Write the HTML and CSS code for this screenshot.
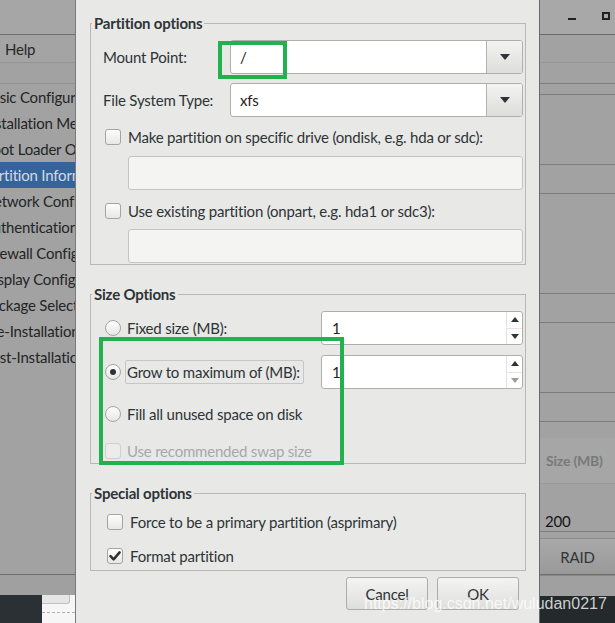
FILE: index.html
```html
<!DOCTYPE html>
<html>
<head>
<meta charset="utf-8">
<title>Partition Information</title>
<link rel="stylesheet" href="styles.css">
</head>
<body>
<div class="screen">
  <aside class="side-left">
    <div class="win-title"></div>
    <div class="menubar"><span class="menu-item">Help</span></div>
    <div class="toolbar"></div>
    <ul class="nav">
      <li>Basic Configuration</li>
      <li>Installation Method</li>
      <li>Boot Loader Options</li>
      <li class="sel">Partition Information</li>
      <li>Network Configuration</li>
      <li>Authentication</li>
      <li>Firewall Configuration</li>
      <li>Display Configuration</li>
      <li>Package Selection</li>
      <li>Pre-Installation Script</li>
      <li>Post-Installation Script</li>
    </ul>
    <div class="statusbar"></div>
    <div class="taskbar">
      <div class="task-dark"></div>
      <div class="task-light"><div class="task-btn"></div><div class="task-dash"></div></div>
    </div>
  </aside>

  <section class="dialog">
    <fieldset class="frame frame-part">
      <legend>Partition options</legend>
      <div class="form-grid">
        <span class="lbl">Mount Point:</span>
        <div class="combo">
          <span class="combo-text">/</span>
          <span class="combo-btn"><svg width="10" height="6" viewBox="0 0 10 6"><polygon points="0,0 10,0 5,6" fill="#2e3436"/></svg></span>
        </div>
        <span class="lbl">File System Type:</span>
        <div class="combo">
          <span class="combo-text">xfs</span>
          <span class="combo-btn"><svg width="10" height="6" viewBox="0 0 10 6"><polygon points="0,0 10,0 5,6" fill="#2e3436"/></svg></span>
        </div>
      </div>
      <label class="opt opt-first"><span class="cb"></span><span>Make partition on specific drive (ondisk, e.g. hda or sdc):</span></label>
      <div class="entry entry-dis entry-a"></div>
      <label class="opt opt-second"><span class="cb"></span><span>Use existing partition (onpart, e.g. hda1 or sdc3):</span></label>
      <div class="entry entry-dis entry-b"></div>
    </fieldset>

    <fieldset class="frame frame-size">
      <legend>Size Options</legend>
      <div class="size-grid">
        <label class="opt-r"><span class="radio"></span><span class="rlabel">Fixed size (MB):</span></label>
        <div class="spin">
          <span class="spin-text">1</span>
          <span class="spin-btns">
            <span class="spin-up"><svg width="8" height="5" viewBox="0 0 8 5"><polygon points="0,5 8,5 4,0" fill="#2e3436"/></svg></span>
            <span class="spin-down"><svg width="8" height="5" viewBox="0 0 8 5"><polygon points="0,0 8,0 4,5" fill="#2e3436"/></svg></span>
          </span>
        </div>
        <label class="opt-r"><span class="radio on"></span><span class="rlabel focus">Grow to maximum of (MB):</span></label>
        <div class="spin">
          <span class="spin-text">1</span>
          <span class="spin-btns">
            <span class="spin-up"><svg width="8" height="5" viewBox="0 0 8 5"><polygon points="0,5 8,5 4,0" fill="#2e3436"/></svg></span>
            <span class="spin-down"><svg width="8" height="5" viewBox="0 0 8 5"><polygon points="0,0 8,0 4,5" fill="#9c9c9a"/></svg></span>
          </span>
        </div>
        <label class="opt-r wide fill-row"><span class="radio"></span><span class="rlabel">Fill all unused space on disk</span></label>
        <label class="opt-r wide swap-row disabled"><span class="cb cb-dis"></span><span class="rlabel">Use recommended swap size</span></label>
      </div>
    </fieldset>

    <fieldset class="frame frame-special">
      <legend>Special options</legend>
      <label class="opt opt-sp1"><span class="cb"></span><span>Force to be a primary partition (asprimary)</span></label>
      <label class="opt opt-sp2"><span class="cb"><svg width="14" height="14" viewBox="0 0 14 14"><path d="M2.5 7.2 L5.6 10.3 L11.6 3.4" fill="none" stroke="#2e3436" stroke-width="2.6" stroke-linecap="round" stroke-linejoin="round"/></svg></span><span>Format partition</span></label>
    </fieldset>

    <div class="actions">
      <button class="btn">Cancel</button>
      <button class="btn">OK</button>
    </div>
  </section>

  <aside class="side-right">
    <div class="r-title">
      <span class="wm-min"></span>
      <span class="wm-max"></span>
    </div>
    <div class="r-row r1"></div>
    <div class="r-row r2"></div>
    <div class="r-row r3"></div>
    <div class="r-row r4"></div>
    <div class="r-row r5"></div>
    <div class="r-row r6"></div>
    <div class="r-row r7"></div>
    <div class="r-row r8"></div>
    <div class="r-row r9"></div>
    <div class="r-row r10"></div>
    <div class="r-head">Size (MB)</div>
    <div class="r-cell">200</div>
    <div class="r-gap"></div>
    <div class="r-btn">RAID</div>
    <div class="r-status"></div>
    <div class="r-task"></div>
  </aside>

  <div class="mark mark-mount"></div>
  <div class="mark mark-size"></div>
  <div class="watermark">https://blog.csdn.net/wuludan0217</div>
</div>
</body>
</html>
```

FILE: styles.css
```css
* { box-sizing: border-box; margin: 0; padding: 0; }
html, body { width: 615px; height: 623px; overflow: hidden; }
body {
  font-family: Lato, "Noto Sans", sans-serif;
  font-size: 15px;
  letter-spacing: -0.2px;
  color: #2e3436;
  background: #a2a2a2;
}
.screen { display: flex; height: 623px; position: relative; }

/* ---------- left (dimmed main window) ---------- */
.side-left {
  width: 75px; flex: none; overflow: hidden;
  display: flex; flex-direction: column;
  background: #a2a2a2;
}
.win-title { height: 35px; flex: none; background: #a6a6a6; border-bottom: 1px solid #6e6e6e; }
.menubar {
  height: 28px; flex: none; border-bottom: 1px solid #959595;
  display: flex; align-items: center; padding-left: 5px; background: #a4a4a4;
}
.menu-item { color: #262828; line-height: 18px; }
.toolbar { height: 21px; flex: none; border-bottom: 1px solid #949494; }
.nav { list-style: none; flex: 1; border-bottom: 1px solid #6e6e6e; }
.nav li {
  height: 26px; line-height: 26px; white-space: nowrap;
  margin-left: -17px; color: #222526;
}
.nav li.sel { background: #34649a; color: #d5dbe2; margin-left: 0; text-indent: -17px; }
.statusbar { height: 20px; flex: none; background: #a0a0a0; }
.taskbar { height: 28px; flex: none; display: flex; }
.task-dark { width: 42px; background: #2a3033; }
.task-light { flex: 1; background: #f6f6f6; }
.task-btn { height: 9px; border: 1px solid #c0c0c0; border-top: none; border-left: none; border-radius: 0 0 3px 0; margin-right: 5px; background: #e6e6e6; }
.task-dash { margin-top: 8px; border-top: 1px dashed #b0b0b0; }

/* ---------- dialog ---------- */
.dialog {
  width: 465px; flex: none;
  background: #e8e8e7;
  border-left: 1px solid #7a7a7a;
  border-right: 1px solid #6a6a6a;
  padding: 14px 13px 0 14px;
  display: flex; flex-direction: column;
}
.frame {
  border: 1px solid #b8b8b5;
  min-width: 0;
  padding: 0;
}
.frame legend {
  font-weight: 700; line-height: 18px;
  padding: 0 2px 0 2px; margin-left: 1px;
  color: #2e3436;
}
.frame-part { padding: 8px 2px 1px 0; }
.frame-size { margin-top: 20px; padding: 8px 2px 0 0; }
.frame-special { margin-top: 20px; padding: 10px 2px 4px 0; }

.form-grid {
  display: grid;
  grid-template-columns: 127px 1fr;
  row-gap: 9px;
  padding-left: 12px;
  align-items: center;
}
.lbl { line-height: 18px; }
.combo {
  height: 34px; display: flex;
  border: 1px solid #afafac; border-radius: 3px;
  background: #fff; overflow: hidden;
}
.combo-text { flex: 1; padding-left: 9px; display: flex; align-items: center; color: #1f2324; }
.combo-btn {
  width: 36px; flex: none;
  border-left: 1px solid #b3b3b0;
  background: linear-gradient(#f3f3f2, #dddddb);
  display: flex; align-items: center; justify-content: center;
}

.opt { display: flex; align-items: center; height: 20px; line-height: 18px; }
.opt .cb { margin-right: 7px; }
.opt-first { margin-top: 10px; padding-left: 14px; }
.opt-second { margin-top: 11px; padding-left: 14px; }
.entry { height: 34px; border-radius: 3px; margin-left: 37px; }
.entry-dis { background: #f4f4f3; border: 1px solid #c4c4c1; }
.entry-a { margin-top: 9px; }
.entry-b { margin-top: 8px; }

.cb {
  width: 16px; height: 16px; flex: none;
  border: 1px solid #a4a4a1; border-radius: 3px;
  background: linear-gradient(#fdfdfd, #e7e7e6);
  display: flex; align-items: center; justify-content: center;
}
.cb-dis { border-color: #cfcfcd; background: #ececeb; }
.radio {
  width: 16px; height: 16px; flex: none;
  border: 1px solid #a4a4a1; border-radius: 50%;
  background: linear-gradient(#fdfdfd, #e7e7e6);
  display: flex; align-items: center; justify-content: center;
}
.radio.on::after { content: ""; width: 6px; height: 6px; border-radius: 50%; background: #2e3436; }

.size-grid {
  display: grid;
  grid-template-columns: 1fr 202px;
  grid-template-rows: 34px 34px 28px 26px;
  row-gap: 10px;
  padding-left: 14px;
}
.size-grid .wide { grid-column: 1 / 3; }
.opt-r { display: flex; align-items: center; line-height: 18px; }
.opt-r .radio, .opt-r .cb { margin-right: 6px; }
.rlabel.focus {
  border: 1px solid #c6c6c4; border-radius: 2px;
  padding: 2px 3px 2px 1px; margin-left: -2px;
}
.fill-row { height: 26px; align-self: end; }
.swap-row { height: 24px; align-self: end; }
.disabled { color: #a7a8a7; }

.spin {
  display: flex; height: 34px;
  border: 1px solid #afafac; border-radius: 3px;
  background: #fff; overflow: hidden;
}
.spin-text { flex: 1; padding-left: 10px; display: flex; align-items: center; color: #1f2324; }
.spin-btns { width: 16px; flex: none; display: flex; flex-direction: column; border-left: 1px solid #e2e2e0; }
.spin-up, .spin-down { flex: 1; display: flex; align-items: center; justify-content: center; }
.spin-up { border-bottom: 1px solid #e6e6e4; }

.opt-sp1 { padding-left: 16px; }
.opt-sp2 { margin-top: 14px; padding-left: 16px; }

.actions { display: flex; justify-content: flex-end; gap: 9px; margin-top: 6px; margin-right: 7px; }
.btn {
  width: 82px; height: 33px;
  font: inherit; letter-spacing: inherit; color: #2e3436;
  border: 1px solid #acacaa; border-radius: 3px;
  background: linear-gradient(#f4f4f3, #dededc);
}

/* ---------- right (dimmed main window) ---------- */
.side-right {
  width: 75px; flex: none; overflow: hidden;
  display: flex; flex-direction: column; background: #a2a2a2;
}
.r-title { height: 35px; flex: none; background: #a8a8a8; border-bottom: 1px solid #6a6a6a; position: relative; }
.wm-min { position: absolute; left: 28px; top: 18px; width: 8px; height: 2px; background: #222; }
.wm-max { position: absolute; left: 62px; top: 12px; width: 8px; height: 8px; border: 2px solid #222; }
.r-row { flex: none; border-bottom: 1px solid #7c7c7c; }
.r1 { height: 28px; border-bottom-color: #989898; }
.r2 { height: 21px; }
.r3 { height: 11px; }
.r4 { height: 70px; }
.r5 { height: 29px; }
.r6 { height: 100px; }
.r7 { height: 29px; }
.r8 { height: 70px; }
.r9 { height: 29px; }
.r10 { height: 16px; border-bottom: none; }
.r-head {
  height: 46px; flex: none; background: #a6a6a6;
  border-bottom: 1px solid #999; padding-left: 6px;
  display: flex; align-items: center;
  color: #777a7b; font-weight: 700; font-size: 14px;
}
.r-cell {
  height: 48px; flex: none; border-bottom: 1px solid #7e7e7e;
  display: flex; align-items: flex-end; padding-left: 5px; padding-bottom: 1px;
  color: #151515; font-size: 15px; line-height: 18px;
}
.r-gap { height: 6px; flex: none; }
.r-btn {
  height: 37px; flex: none;
  background: linear-gradient(#a9a9a9, #999);
  border-top: 1px solid #8c8c8c; border-bottom: 1px solid #6e6e6e;
  display: flex; align-items: center; justify-content: center;
  color: #313536; font-size: 15px;
}
.r-status { height: 21px; flex: none; background: #a0a0a0; border-top: 1px solid #878787; }
.r-task { flex: 1; background: #24292c; }

/* ---------- overlays ---------- */
.mark { position: absolute; border: 4px solid #22b14c; }
.mark-mount { left: 218px; top: 41px; width: 69px; height: 38px; }
.mark-size { left: 99px; top: 337px; width: 245px; height: 128px; }
.watermark {
  position: absolute; left: 364px; top: 595px;
  font-family: "Liberation Sans", Arial, sans-serif; font-size: 16px; line-height: 18px;
  letter-spacing: 0;
  color: rgba(255, 255, 255, 0.78);
  white-space: nowrap;
}
```
